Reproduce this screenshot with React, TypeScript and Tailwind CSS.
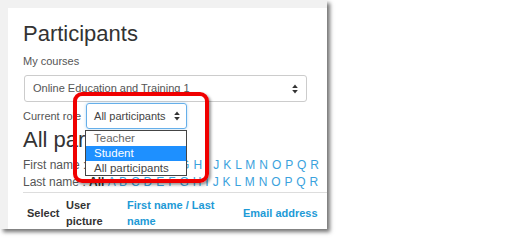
import React from 'react'

const font = { fontFamily: '"Liberation Sans", Arial, sans-serif' }

function Arrows() {
  return (
    <svg width="6" height="10" viewBox="0 0 6 10" className="shrink-0">
      <path d="M3 0.5 L5.8 4 H0.2 Z" fill="#333" />
      <path d="M3 9.5 L5.8 6 H0.2 Z" fill="#333" />
    </svg>
  )
}

const letters = 'ABCDEFGHIJKLMNOPQR'.split('')

function InitialsRow({ label }: { label: string }) {
  return (
    <div className="text-[12px] leading-[17px] whitespace-nowrap text-[#555]">
      {label} : <b className="text-[#333]">All</b>{' '}
      {letters.map((l) => (
        <span key={l} className="text-[#3aa2dd] tracking-[0.3px]">
          {l}{' '}
        </span>
      ))}
    </div>
  )
}

export default function App() {
  return (
    <div className="w-[507px] h-[242px] bg-white relative overflow-hidden" style={font}>
      <div className="w-[327px] h-[229px] bg-[#f1f1f1] pl-[8px] pt-[8px] overflow-hidden shadow-[3px_3px_4px_rgba(0,0,0,0.55)]">
        <div className="bg-white h-full pl-[15px] pt-[13px] overflow-hidden">
          <h1 className="text-[22px] leading-[26px] text-[#333]">Participants</h1>
          <div className="mt-[7px] text-[11px] leading-[14px] text-[#555]">My courses</div>
          <div className="mt-[7px] ml-[1px] w-[283px] h-[27px] border border-[#ccc] rounded-[3px] flex items-center justify-between pl-[8px] pr-[8px] text-[11px] text-[#555]">
            <span>Online Education and Training 1</span>
            <Arrows />
          </div>
          <div className="mt-[1px] flex items-center gap-[5px] text-[11px] text-[#555]">
            <span>Current role</span>
            <div className="w-[101px] h-[26px] border border-[#66afe9] rounded-[3px] flex items-center justify-between pl-[7px] pr-[6px] text-[#444] shadow-[0_0_3px_rgba(102,175,233,0.5)]">
              <span>All participants</span>
              <Arrows />
            </div>
          </div>
          <h2 className="text-[22px] leading-[22px] text-[#333]">All participants</h2>
          <div className="mt-[6px]">
            <InitialsRow label="First name" />
            <InitialsRow label="Last name" />
          </div>
          <div className="mt-[1px] border-t border-[#ddd] pt-[4px] pl-[4px] flex items-center text-[11px] leading-[16px] font-bold whitespace-nowrap">
            <div className="w-[39px] text-[#333]">Select</div>
            <div className="w-[61px] text-[#333]">
              User
              <br />
              picture
            </div>
            <div className="w-[116px] text-[#1d9ad6]">
              First name / Last
              <br />
              name
            </div>
            <div className="text-[#1d9ad6]">Email address</div>
          </div>
        </div>
      </div>

      <div className="absolute left-[85px] top-[130px] w-[102px] bg-white border border-[#444] text-[11.5px] leading-[14px]">
        <div className="h-[15px] pl-[8px] text-[#666]">Teacher</div>
        <div className="h-[15px] pl-[8px] bg-[#1e90ff] text-white">Student</div>
        <div className="h-[14px] pl-[8px] text-[#444]">All participants</div>
      </div>

      <div className="absolute left-[73px] top-[92px] w-[136px] h-[91px] border-[4px] border-[#f00000] rounded-[9px] shadow-[2px_2px_3px_rgba(0,0,0,0.4)]" />
    </div>
  )
}
